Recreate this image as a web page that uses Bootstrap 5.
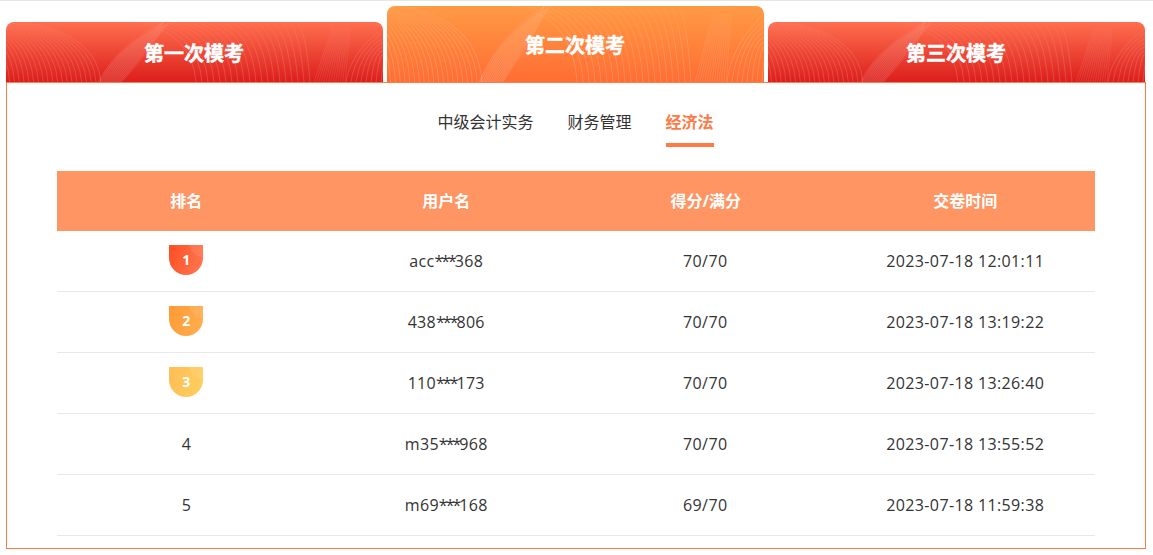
<!DOCTYPE html>
<html lang="zh-CN">
<head>
<meta charset="utf-8">
<title>排行榜</title>
<link href="https://cdn.jsdelivr.net/npm/bootstrap@5.3.0/dist/css/bootstrap.min.css" rel="stylesheet">
<style>
html,body{height:555px;overflow:hidden;background:#fff}
body{font-family:"Noto Sans CJK SC","Open Sans",sans-serif;border-top:1px solid #e6e6e6;color:#333}
.lat{font-family:"Open Sans","Noto Sans CJK SC",sans-serif}
.shell{width:1140px;margin-left:6px}
.tabs-row{height:81px;gap:4px;padding-top:5px}
.exam-tab{width:377px;height:60px;border-radius:8px 8px 0 0;overflow:hidden;background:linear-gradient(180deg,#ff6f4f 0%,#dc1e1c 100%);color:#fff;font-size:20px;font-weight:700;text-decoration:none}
.exam-tab.on{height:76px;background:linear-gradient(180deg,#ff9a45 0%,#ff6d33 100%)}
.exam-tab .ttl{line-height:1;top:1px;left:-.5px;-webkit-text-stroke:.4px #fff}
.exam-tab svg{inset:0;width:377px;height:100%}
.panel-box{height:467px;border:1px solid #ff7a45;background:#fff;padding:0 50px}
.sub-row{height:88px;gap:34px;padding-top:17px;padding-right:1px}
.sub-link{height:47px;font-size:16px;line-height:43px;color:#333;text-decoration:none;padding-bottom:4px}
.sub-link.on{color:#ff7a45;font-weight:700;border-bottom:4px solid #ff7a45;padding-bottom:0;height:47px}
.rank-tb{table-layout:fixed;width:1038px;margin:0;font-size:16px;color:#333;border-collapse:separate;border-spacing:0}
.rank-tb th{height:60px;background:#ff9562;color:#fff;font-weight:700;font-size:16px;border:0;padding:0;vertical-align:middle;text-align:center}
.rank-tb td{height:61px;border-bottom:1px solid #e8e8e8;padding:0 0 1px;vertical-align:middle;text-align:center;color:#333}
.rank-tb td:first-child,.rank-tb th:first-child,.rank-tb td:nth-child(3){padding-right:1px}
.medal{width:34px;height:30px;border-radius:0 0 17px 17px;overflow:hidden;color:#fff;font-size:14px;font-weight:700;line-height:30px;margin-top:-1px;font-family:"Open Sans",sans-serif}
.medal::before{content:"";position:absolute;width:28px;height:28px;border-radius:50%;left:20px;top:-16px;background:rgba(255,255,255,.09)}
.medal span{position:relative}
.m1{background:linear-gradient(110deg,#ff4d22,#ff7a52)}
.m2{background:linear-gradient(110deg,#ff9a35,#ffaf50)}
.m3{background:linear-gradient(110deg,#ffbd55,#ffd060)}
.dt{letter-spacing:.37px}
.sc{letter-spacing:.4px}
.nm{letter-spacing:.3px}
.st{letter-spacing:-2px}
</style>
</head>
<body>
<div class="shell">
  <div class="tabs-row d-flex align-items-end">
    <a class="exam-tab position-relative d-flex justify-content-center align-items-center" href="#"><svg class="position-absolute" viewBox="0 0 377 60" preserveAspectRatio="none"></svg><span class="ttl position-relative">第一次模考</span></a>
    <a class="exam-tab on position-relative d-flex justify-content-center align-items-center" href="#"><svg class="position-absolute" viewBox="0 0 377 60" preserveAspectRatio="none"></svg><span class="ttl position-relative">第二次模考</span></a>
    <a class="exam-tab position-relative d-flex justify-content-center align-items-center" href="#"><svg class="position-absolute" viewBox="0 0 377 60" preserveAspectRatio="none"></svg><span class="ttl position-relative">第三次模考</span></a>
  </div>
  <div class="panel-box">
    <div class="sub-row d-flex justify-content-center align-items-start">
      <a class="sub-link" href="#">中级会计实务</a>
      <a class="sub-link" href="#">财务管理</a>
      <a class="sub-link on" href="#">经济法</a>
    </div>
    <table class="table rank-tb lat">
      <thead><tr><th>排名</th><th>用户名</th><th>得分/满分</th><th>交卷时间</th></tr></thead>
      <tbody>
        <tr><td><div class="medal m1 position-relative mx-auto"><span>1</span></div></td><td class="nm">acc<span class="st">***</span>368</td><td class="sc">70/70</td><td class="dt">2023-07-18 12:01:11</td></tr>
        <tr><td><div class="medal m2 position-relative mx-auto"><span>2</span></div></td><td class="nm">438<span class="st">***</span>806</td><td class="sc">70/70</td><td class="dt">2023-07-18 13:19:22</td></tr>
        <tr><td><div class="medal m3 position-relative mx-auto"><span>3</span></div></td><td class="nm">110<span class="st">***</span>173</td><td class="sc">70/70</td><td class="dt">2023-07-18 13:26:40</td></tr>
        <tr><td>4</td><td class="nm">m35<span class="st">***</span>968</td><td class="sc">70/70</td><td class="dt">2023-07-18 13:55:52</td></tr>
        <tr><td>5</td><td class="nm">m69<span class="st">***</span>168</td><td class="sc">69/70</td><td class="dt">2023-07-18 11:59:38</td></tr>
      </tbody>
    </table>
  </div>
</div>
<script src="https://cdn.jsdelivr.net/npm/bootstrap@5.3.0/dist/js/bootstrap.bundle.min.js"></script>
<script>
document.querySelectorAll('.exam-tab svg').forEach(function(s,t){
  var a='',b='',f='';
  for(var i=0;i<22;i++){
    var x1=-6+i*4.8, x0=-46+i*3.2;
    a+='<path d="M'+x0+' 0 Q'+(x1-3)+' 14 '+x1+' 60"/>';
  }
  for(var j=0;j<20;j++){
    var ex=190+j*6, sx=130+j*8.5;
    a+='<path d="M'+sx+' 0 Q'+(ex-4)+' 10 '+ex+' 60"/>';
  }
  for(var n=0;n<8;n++){
    var ex2=340+n*5;
    a+='<path d="M'+ex2+' 60 Q'+(ex2+4)+' '+(30-n)+' 380 '+(4+n*5)+'"/>';
  }
  for(var k=0;k<14;k++){
    f+='<path d="M'+(92+k*1.8)+' 60 C'+(104+k*2.4)+' 38 '+(124+k*2.4)+' 16 '+(158-k*.1)+' 0"/>';
    b+='<path d="M'+(308+k*2.4)+' 60 L'+(326+k*1.4)+' 6"/>';
  }
  var id='fade'+t;
  s.innerHTML='<defs><linearGradient id="'+id+'" gradientUnits="userSpaceOnUse" x1="0" y1="0" x2="0" y2="60"><stop offset="0" stop-color="#fff" stop-opacity=".03"/><stop offset=".5" stop-color="#fff" stop-opacity=".16"/><stop offset="1" stop-color="#fff" stop-opacity=".2"/></linearGradient></defs>'+
   '<path d="M92 60 C106 34 130 14 164 0 L116 60Z" fill="rgba(255,255,255,.07)"/>'+
   '<g fill="none" stroke="url(#'+id+')" stroke-width=".8">'+a+'</g>'+
   '<g fill="none" stroke="url(#'+id+')" stroke-width=".5">'+f+b+'</g>';
});
</script>
</body>
</html>
